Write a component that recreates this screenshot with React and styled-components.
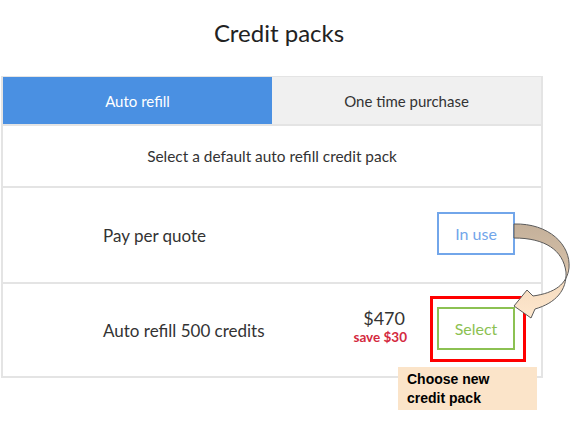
import React from 'react';
import styled, { createGlobalStyle } from 'styled-components';

const GlobalStyle = createGlobalStyle`
  body {
    margin: 0;
    background: #ffffff;
    font-family: Lato, "Open Sans", sans-serif;
    color: #333333;
  }
`

const Page = styled.div`
  position: relative;
  width: 585px;
  height: 436px;
  overflow: hidden;
`

const Title = styled.h1`
  width: 558px;
  margin: 20px 0 0 0;
  font-size: 24px;
  font-weight: 400;
  line-height: 26px;
  height: 30px;
  text-align: center;
  color: #222222;
`

const Panel = styled.div`
  width: 542px;
  box-sizing: border-box;
  margin: 26px 0 0 1px;
  border: 2px solid #e4e4e4;
  border-top-width: 1px;
  display: flex;
  flex-direction: column;
`

const Tabs = styled.div`
  display: flex;
  height: 47px;
`

const Tab = styled.div`
  flex: 1;
  display: flex;
  align-items: center;
  justify-content: center;
  font-size: 15px;
  background: ${props => props.active ? '#4a90e2' : '#f0f0f0'};
  color: ${props => props.active ? '#ffffff' : '#333333'};
`

const Intro = styled.div`
  height: 60px;
  border-top: 2px solid #e4e4e4;
  display: flex;
  align-items: center;
  justify-content: center;
  font-size: 15.4px;
  color: #333333;
`

const PackRow = styled.div`
  height: ${props => props.h}px;
  border-top: 2px solid #e4e4e4;
  display: flex;
  align-items: center;
  padding: 0 26px 0 100px;
`

const PackName = styled.div`
  flex: 1;
  font-size: 17px;
  color: #333333;
`

const Price = styled.div`
  display: flex;
  flex-direction: column;
  align-items: flex-end;
  margin: 0 30px 8px 0;
`

const Amount = styled.div`
  font-size: 18px;
  line-height: 19px;
  color: #333333;
  margin-right: 2px;
`

const Save = styled.div`
  font-size: 13.5px;
  line-height: 14px;
  margin-top: 2px;
  font-weight: 700;
  color: #d42a40;
`

const Button = styled.div`
  position: relative;
  width: 78px;
  height: 43px;
  box-sizing: border-box;
  margin-bottom: 3px;
  display: flex;
  align-items: center;
  justify-content: center;
  font-size: 16px;
  border: 2px solid ${props => props.color};
  color: ${props => props.color};
  background: #ffffff;
`

const Highlight = styled.div`
  position: absolute;
  left: -9px;
  top: -13px;
  width: 96px;
  height: 66px;
  box-sizing: border-box;
  border: 3px solid #ff0000;
`

const Callout = styled.div`
  position: absolute;
  left: 398px;
  top: 367px;
  width: 139px;
  height: 43px;
  box-sizing: border-box;
  padding: 3px 0 0 9px;
  background: #fbe4c9;
  font-family: "Liberation Sans", Arial, sans-serif;
  font-weight: 700;
  font-size: 14px;
  line-height: 19px;
  color: #000000;
`

const ArrowSvg = styled.svg`
  position: absolute;
  left: 505px;
  top: 215px;
  pointer-events: none;
`

const CurvedArrow = () => (
  <ArrowSvg width="70" height="110" viewBox="505 215 70 110">
    <defs>
      <linearGradient id="arrowFill" x1="0" y1="224" x2="0" y2="315" gradientUnits="userSpaceOnUse">
        <stop offset="0" stopColor="#c4b09a" />
        <stop offset="0.45" stopColor="#d3bea6" />
        <stop offset="0.55" stopColor="#f3d9bd" />
        <stop offset="1" stopColor="#fde6cc" />
      </linearGradient>
    </defs>
    <path
      d="M514 224 C549 223 571 245 569 268 C567 284 555 293 533 296 L527 290 L514 306 L531 318 L535 309 C556 303 567 290 566 272 C563 250 545 238 514 238 Z"
      fill="url(#arrowFill)"
      stroke="#5a5a5a"
      strokeWidth="1"
      strokeLinejoin="round"
    />
  </ArrowSvg>
)

export default function App() {
  return (
    <Page>
      <GlobalStyle />
      <Title>Credit packs</Title>
      <Panel>
        <Tabs>
          <Tab active>Auto refill</Tab>
          <Tab>One time purchase</Tab>
        </Tabs>
        <Intro>Select a default auto refill credit pack</Intro>
        <PackRow h={94}>
          <PackName>Pay per quote</PackName>
          <Button color="#72a6ea">In use</Button>
        </PackRow>
        <PackRow h={92}>
          <PackName>Auto refill 500 credits</PackName>
          <Price>
            <Amount>$470</Amount>
            <Save>save $30</Save>
          </Price>
          <Button color="#8cc152">
            Select
            <Highlight />
          </Button>
        </PackRow>
      </Panel>
      <CurvedArrow />
      <Callout>Choose new<br />credit pack</Callout>
    </Page>
  );
}
